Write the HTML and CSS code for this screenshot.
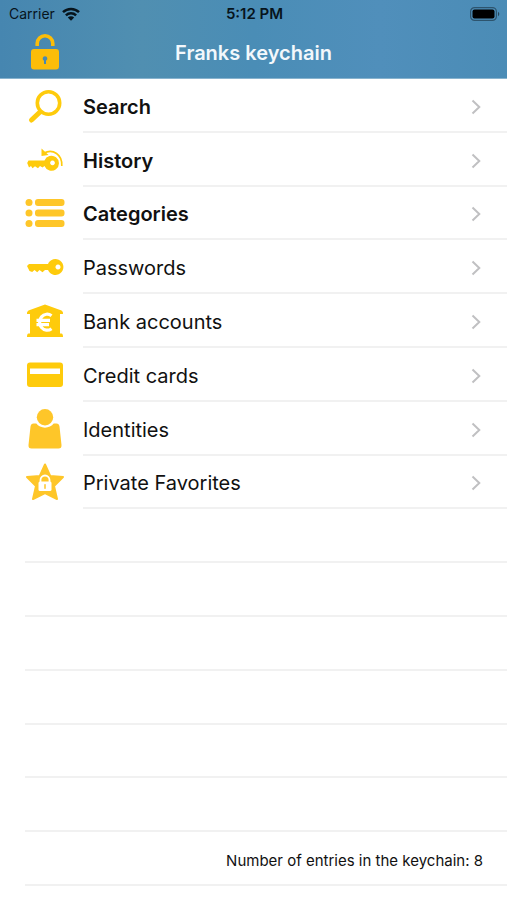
FILE: index.html
```html
<!DOCTYPE html>
<html lang="en">
<head>
  <meta charset="UTF-8" />
  <meta name="viewport" content="width=device-width, initial-scale=1.0"/>
  <title>Franks keychain</title>
  <link rel="stylesheet" href="styles.css">
</head>
<body>
  <header class="top">
    <!-- Status bar -->
    <div class="status">
      <div class="carrier">
        <span>Carrier</span>
        <svg class="wifi" viewBox="0 0 18 14" aria-hidden="true">
          <path d="M1 5.2a11.5 11.5 0 0 1 16 0M3.9 8.3a7.3 7.3 0 0 1 10.2 0" fill="none" stroke="currentColor" stroke-width="2.5"/>
          <path d="M9 13.8 5.8 10.6a4.6 4.6 0 0 1 6.4 0z" fill="currentColor"/>
        </svg>
      </div>
      <time class="clock">5:12 PM</time>
      <svg class="battery" viewBox="0 0 30 14" aria-hidden="true">
        <rect x="0.6" y="0.6" width="25.8" height="12.8" rx="4" fill="none" stroke="#000" stroke-opacity=".4" stroke-width="1.2"/>
        <rect x="2.5" y="2.5" width="22" height="9" rx="2" fill="#000"/>
        <path d="M28 4.8v4.4a2.5 2.5 0 0 0 0-4.4z" fill="#000" fill-opacity=".5"/>
      </svg>
    </div>

    <!-- Title bar -->
    <div class="navbar">
      <button class="lock" type="button" aria-label="Lock keychain">
        <svg class="icon" viewBox="0 0 40 40">
          <path d="M12.2 13v-2.5a7.8 7.8 0 0 1 15.6 0V13" fill="none" stroke="currentColor" stroke-width="3.6"/>
          <path fill="currentColor" fill-rule="evenodd" d="M9 16h22a3 3 0 0 1 3 3v14.5a3 3 0 0 1-3 3H9a3 3 0 0 1-3-3V19a3 3 0 0 1 3-3zM20 23.3a2.3 2.3 0 0 0-1 4.4V31h2v-3.300a2.3 2.3 0 0 0-1-4.400z"/>
        </svg>
      </button>
      <h1>Franks keychain</h1>
    </div>
  </header>

  <main class="list">
    <a class="row strong" href="#search">
      <svg class="icon" viewBox="0 0 40 40" aria-hidden="true">
        <circle cx="23.5" cy="17" r="11.2" fill="none" stroke="currentColor" stroke-width="3.6"/>
        <path d="M15 26 6.500 34" stroke="currentColor" stroke-width="5" stroke-linecap="round"/>
      </svg>
      <span class="cell">Search <svg class="chevron" viewBox="0 0 10 16"><path d="M1.5 1.5 8.3 8l-6.8 6.5"/></svg></span>
    </a>
    <a class="row strong" href="#history">
      <svg class="icon" viewBox="0 0 40 40" aria-hidden="true">
        <path fill="currentColor" fill-rule="evenodd" d="M3.5 20.5H19.500a7.500 7.500 0 1 1 0 5.500l-2 1.500-2.500-1.500-2 2.300-3-2-2.500 1.900L6 26l-2 1.500-1.800-4.500zM27.500 20.500a2.400 2.400 0 1 0 .01 0z"/>
        <path d="M19 13C28 8.500 37.500 14.500 36.800 26" fill="none" stroke="currentColor" stroke-width="1.6"/>
        <path d="M16.500 8.500v7.500l7-1z" fill="currentColor"/>
      </svg>
      <span class="cell">History <svg class="chevron" viewBox="0 0 10 16"><path d="M1.5 1.5 8.3 8l-6.8 6.5"/></svg></span>
    </a>
    <a class="row strong" href="#categories">
      <svg class="icon amber" viewBox="0 0 40 40" aria-hidden="true">
        <g fill="currentColor">
          <circle cx="4" cy="9.5" r="3.5"/><rect x="10" y="6" width="29.5" height="7" rx="3"/>
          <circle cx="4" cy="20" r="3.5"/><rect x="10" y="16.5" width="29.5" height="7" rx="3"/>
          <circle cx="4" cy="30.5" r="3.5"/><rect x="10" y="27" width="29.5" height="7" rx="3"/>
        </g>
      </svg>
      <span class="cell">Categories <svg class="chevron" viewBox="0 0 10 16"><path d="M1.5 1.5 8.3 8l-6.8 6.5"/></svg></span>
    </a>
    <a class="row" href="#passwords">
      <svg class="icon" viewBox="0 0 40 40" aria-hidden="true">
        <path fill="currentColor" fill-rule="evenodd" d="M4 17h19a8 8 0 1 1 0 6h-3l-2.5 2.3-3-2.3-2.3 2.3L9.500 23l-2.300 2L4.500 24 2 19zM33 17.500a2.500 2.500 0 1 0 .01 0z"/>
      </svg>
      <span class="cell">Passwords <svg class="chevron" viewBox="0 0 10 16"><path d="M1.5 1.5 8.3 8l-6.8 6.5"/></svg></span>
    </a>
    <a class="row" href="#bank">
      <svg class="icon" viewBox="0 0 40 40" aria-hidden="true">
        <path d="M20 3.500 36.500 9.500Q38.500 10.500 38 13H35v19.500h1.500q1.500 0 1.500 3.500H2q0-3.500 1.500-3.500H5V13H2q-.5-2.500 1.500-3.500z" fill="currentColor"/>
        <path d="M26.500 14.700a7.500 8 0 1 0 0 13M11.500 19.300H25M11.500 23.600H24" fill="none" stroke="#fff" stroke-width="3.2"/>
      </svg>
      <span class="cell">Bank accounts <svg class="chevron" viewBox="0 0 10 16"><path d="M1.5 1.5 8.3 8l-6.8 6.5"/></svg></span>
    </a>
    <a class="row" href="#cards">
      <svg class="icon" viewBox="0 0 40 40" aria-hidden="true">
        <rect x="2" y="7.5" width="36" height="24.5" rx="3" fill="currentColor"/>
        <path d="M5 13.5h30V19H5z" fill="#fff"/>
      </svg>
      <span class="cell">Credit cards <svg class="chevron" viewBox="0 0 10 16"><path d="M1.5 1.5 8.3 8l-6.8 6.5"/></svg></span>
    </a>
    <a class="row" href="#identities">
      <svg class="icon amber" viewBox="0 0 40 40" aria-hidden="true">
        <circle cx="20" cy="8.3" r="8.2" fill="currentColor"/>
        <path d="M8.500 14.500h2.800c3.700 5.500 13.700 5.500 17.400 0h2.800q2.500 0 3 3L36.500 36q.3 3.500-3 3.500h-27q-3.300 0-3-3.500l2-18.500q.5-3 3-3z" fill="currentColor"/>
      </svg>
      <span class="cell">Identities <svg class="chevron" viewBox="0 0 10 16"><path d="M1.5 1.5 8.3 8l-6.8 6.5"/></svg></span>
    </a>
    <a class="row" href="#favorites">
      <svg class="icon amber" viewBox="0 0 40 40" aria-hidden="true">
        <path d="M20 2.500 25.200 14 38 15 29 24 32 37 20 31 8 37 11 24 2 15l12.800-1z" fill="currentColor" stroke="currentColor" stroke-width="2" stroke-linejoin="round"/>
        <path d="M15.500 20v-2a4.500 4.500 0 0 1 9 0v2" fill="none" stroke="#fff" stroke-width="1.8"/>
        <rect x="13.5" y="19.5" width="13" height="9.5" rx="1.5" fill="#fff"/>
        <path d="M20 22.7v3.5" stroke="currentColor" stroke-width="1.5" stroke-linecap="round"/>
      </svg>
      <span class="cell">Private Favorites <svg class="chevron" viewBox="0 0 10 16"><path d="M1.5 1.5 8.3 8l-6.8 6.5"/></svg></span>
    </a>

    <!-- Empty rows -->
    <div class="blank"></div>
    <div class="blank"></div>
    <div class="blank"></div>
    <div class="blank"></div>
    <div class="blank"></div>
    <div class="blank"></div>
    <p class="blank count">Number of entries in the keychain: 8</p>
  </main>
</body>
</html>
```

FILE: styles.css
```css
* {
  box-sizing: border-box;
}
body {
  font-family: Inter, "Liberation Sans", sans-serif;
  background: #fff;
  color: #111;
  margin: 0;
  min-height: 100vh;
  display: flex;
  flex-direction: column;
}
.top {
  background: linear-gradient(to right, #4686b0, #508fb1 28%, #4a8db6 50%, #508fbb 75%, #4b8cb6);
  border-bottom: 1px solid #88b3ce;
}

/* Status bar */
.status {
  display: grid;
  grid-template-columns: 1fr auto 1fr;
  align-items: center;
  height: 27px;
  padding: 0 7px 0 9px;
  font-size: 14px;
  color: #07141c;
}
.carrier {
  display: flex;
  align-items: center;
  gap: 7px;
}
.wifi {
  width: 18px;
  height: 14px;
}
.clock {
  font-size: 15px;
  font-weight: 600;
}
.battery {
  width: 30px;
  height: 14px;
  justify-self: end;
}

/* Title bar */
.navbar {
  display: grid;
  grid-template-columns: 1fr auto 1fr;
  align-items: center;
  height: 51px;
  padding: 0 25px;
}
.navbar h1 {
  margin: 0;
  font-size: 20px;
  font-weight: 600;
  color: #f3f8fc;
}
.lock {
  justify-self: start;
  padding: 0;
  border: none;
  background: none;
  color: #fcbd08;
  cursor: pointer;
}
.icon {
  display: block;
  width: 40px;
  height: 40px;
  flex: none;
}

/* Keychain list */
.list {
  flex: 1;
  display: grid;
  grid-auto-rows: 1fr;
  padding-bottom: 14px;
}
.row {
  display: flex;
  align-items: center;
  gap: 18px;
  padding-left: 25px;
  color: #fecb0c;
  text-decoration: none;
}
.row .amber {
  color: #fec629;
}
.cell {
  flex: 1;
  align-self: stretch;
  display: flex;
  align-items: center;
  justify-content: space-between;
  padding: 4px 26px 0 0;
  border-bottom: 2px solid #f1f1f1;
  font-size: 20px;
  color: #111;
}
.strong .cell {
  font-weight: 600;
}
.chevron {
  width: 10px;
  height: 16px;
  fill: none;
  stroke: #c0c0c2;
  stroke-width: 2;
}
.blank {
  min-height: 40px;
  margin: 0 0 0 25px;
  border-bottom: 2px solid #f1f1f1;
}
.count {
  display: flex;
  align-items: center;
  justify-content: flex-end;
  padding: 4px 24px 0 0;
  font-size: 15px;
}
```
